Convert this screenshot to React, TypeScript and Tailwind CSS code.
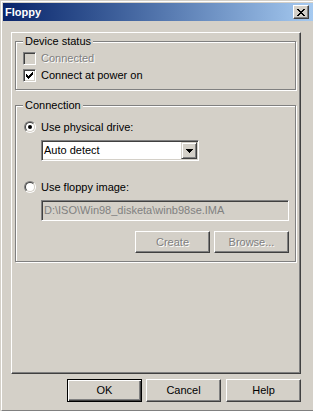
import React from "react";

const raised =
  "border border-t-white border-l-white border-r-[#404040] border-b-[#404040] shadow-[inset_-1px_-1px_0_#808080]";
const sunken =
  "border border-t-[#808080] border-l-[#808080] border-r-white border-b-white shadow-[inset_1px_1px_0_#404040,inset_-1px_-1px_0_#d4d0c8]";
const txt = "text-[11px] leading-[13px] whitespace-nowrap";
const disabledTxt = "text-[#808080] [text-shadow:1px_1px_0_#ffffff]";

function CheckBox({ checked, disabled }: { checked?: boolean; disabled?: boolean }) {
  return (
    <div
      className={`w-[13px] h-[13px] shrink-0 flex items-center justify-center ${sunken} ${
        disabled ? "bg-[#d4d0c8]" : "bg-white"
      }`}
    >
      {checked && (
        <svg width="7" height="7" viewBox="0 0 7 7" shapeRendering="crispEdges">
          <rect x="6" y="0" width="1" height="3" fill="#000" />
          <rect x="5" y="1" width="1" height="3" fill="#000" />
          <rect x="4" y="2" width="1" height="3" fill="#000" />
          <rect x="3" y="3" width="1" height="3" fill="#000" />
          <rect x="2" y="4" width="1" height="3" fill="#000" />
          <rect x="1" y="3" width="1" height="3" fill="#000" />
          <rect x="0" y="2" width="1" height="3" fill="#000" />
        </svg>
      )}
    </div>
  );
}

function Radio({ checked }: { checked?: boolean }) {
  return (
    <div className="w-[12px] h-[12px] shrink-0 rounded-full border border-t-[#808080] border-l-[#808080] border-r-white border-b-white">
      <div className="w-full h-full rounded-full border border-t-[#404040] border-l-[#404040] border-r-[#d4d0c8] border-b-[#d4d0c8] bg-white flex items-center justify-center">
        {checked && <div className="w-[4px] h-[4px] rounded-full bg-black" />}
      </div>
    </div>
  );
}

function Group({
  label,
  className,
  children,
}: {
  label: string;
  className: string;
  children: React.ReactNode;
}) {
  return (
    <div
      className={`relative border border-[#808080] shadow-[inset_1px_1px_0_#ffffff,1px_1px_0_#ffffff] ${className}`}
    >
      <span className={`absolute left-[7px] -top-[7px] px-[2px] bg-[#d4d0c8] text-black ${txt}`}>
        {label}
      </span>
      {children}
    </div>
  );
}

function Button({
  label,
  disabled,
  isDefault,
  className = "",
}: {
  label: string;
  disabled?: boolean;
  isDefault?: boolean;
  className?: string;
}) {
  const frame = isDefault
    ? "border border-black shadow-[inset_1px_1px_0_#ffffff,inset_-1px_-1px_0_#404040,inset_-2px_-2px_0_#808080]"
    : raised;
  return (
    <div
      className={`w-[75px] flex items-center justify-center bg-[#d4d0c8] ${frame} ${txt} ${
        disabled ? disabledTxt : "text-black"
      } ${className}`}
    >
      {label}
    </div>
  );
}

export default function App() {
  return (
    <div className="w-[313px] h-[411px] bg-[#d4d0c8] pt-px pl-px overflow-hidden font-['Liberation_Sans',Arial,sans-serif]">
      <div className="h-[410px] border-t border-l border-white border-b border-b-[#808080] pt-px pl-px flex flex-col">
        {/* Title bar */}
        <div className="h-[18px] shrink-0 bg-linear-to-r from-[#0a246a] to-[#a6caf0] flex items-start justify-between pl-[2px] pr-[4px]">
          <span className="text-white font-bold text-[11px] leading-[13px] mt-[3px]">Floppy</span>
          <div
            className={`mt-[2px] w-[16px] h-[14px] bg-[#d4d0c8] flex items-center justify-center ${raised}`}
          >
            <svg width="8" height="7" viewBox="0 0 8 7" shapeRendering="crispEdges">
              <rect x="0" y="0" width="2" height="1" fill="#000" />
              <rect x="6" y="0" width="2" height="1" fill="#000" />
              <rect x="1" y="1" width="2" height="1" fill="#000" />
              <rect x="5" y="1" width="2" height="1" fill="#000" />
              <rect x="2" y="2" width="4" height="1" fill="#000" />
              <rect x="3" y="3" width="2" height="1" fill="#000" />
              <rect x="2" y="4" width="4" height="1" fill="#000" />
              <rect x="1" y="5" width="2" height="1" fill="#000" />
              <rect x="5" y="5" width="2" height="1" fill="#000" />
              <rect x="0" y="6" width="2" height="1" fill="#000" />
              <rect x="6" y="6" width="2" height="1" fill="#000" />
            </svg>
          </div>
        </div>

        {/* Page panel */}
        <div className="mt-[11px] ml-[8px] w-[290px] h-[342px] shrink-0 border border-t-white border-l-white border-r-[#404040] border-b-[#404040] shadow-[inset_-1px_-1px_0_#808080]">
          <Group label="Device status" className="ml-[3px] mt-[8px] w-[281px] h-[49px] pt-[10px] pl-[7px] flex flex-col gap-[4px]">
            <div className="flex items-center gap-[5px] h-[13px]">
              <CheckBox disabled />
              <span className={`${txt} ${disabledTxt}`}>Connected</span>
            </div>
            <div className="flex items-center gap-[5px] h-[13px]">
              <CheckBox checked />
              <span className={`${txt} text-black`}>Connect at power on</span>
            </div>
          </Group>

          <Group label="Connection" className="ml-[3px] mt-[15px] w-[281px] h-[157px] pt-[15px] pl-[8px] flex flex-col">
            <div className="flex items-start gap-[5px] h-[13px]">
              <Radio checked />
              <span className={`${txt} text-black`}>Use physical drive:</span>
            </div>
            <div className={`ml-[17px] mt-[6px] w-[158px] h-[21px] p-px bg-white flex ${sunken}`}>
              <div className={`flex-1 flex items-center pl-[1px] text-black ${txt}`}>Auto detect</div>
              <div className={`w-[16px] h-[17px] bg-[#d4d0c8] flex items-center justify-center border border-t-[#d4d0c8] border-l-[#d4d0c8] border-r-[#404040] border-b-[#404040] shadow-[inset_1px_1px_0_#ffffff,inset_-1px_-1px_0_#808080]`}>
                <svg width="7" height="4" viewBox="0 0 7 4" shapeRendering="crispEdges">
                  <rect x="0" y="0" width="7" height="1" fill="#000" />
                  <rect x="1" y="1" width="5" height="1" fill="#000" />
                  <rect x="2" y="2" width="3" height="1" fill="#000" />
                  <rect x="3" y="3" width="1" height="1" fill="#000" />
                </svg>
              </div>
            </div>

            <div className="flex items-start gap-[5px] h-[13px] mt-[20px]">
              <Radio />
              <span className={`${txt} text-black`}>Use floppy image:</span>
            </div>
            <div className={`ml-[17px] mt-[6px] w-[248px] h-[21px] bg-[#d4d0c8] flex items-center pl-[2px] text-[#808080] ${txt} ${sunken}`}>
              D:\ISO\Win98_disketa\winb98se.IMA
            </div>
            <div className="ml-[17px] mt-[10px] w-[248px] flex justify-end gap-[4px]">
              <Button label="Create" disabled className="h-[22px]" />
              <Button label="Browse..." disabled className="h-[22px]" />
            </div>
          </Group>
        </div>

        {/* Dialog buttons */}
        <div className="mt-[5px] pl-[64px] flex">
          <Button label="OK" isDefault className="h-[23px]" />
          <Button label="Cancel" className="h-[23px] ml-[4px]" />
          <Button label="Help" className="h-[23px] ml-[5px]" />
        </div>
      </div>
    </div>
  );
}
